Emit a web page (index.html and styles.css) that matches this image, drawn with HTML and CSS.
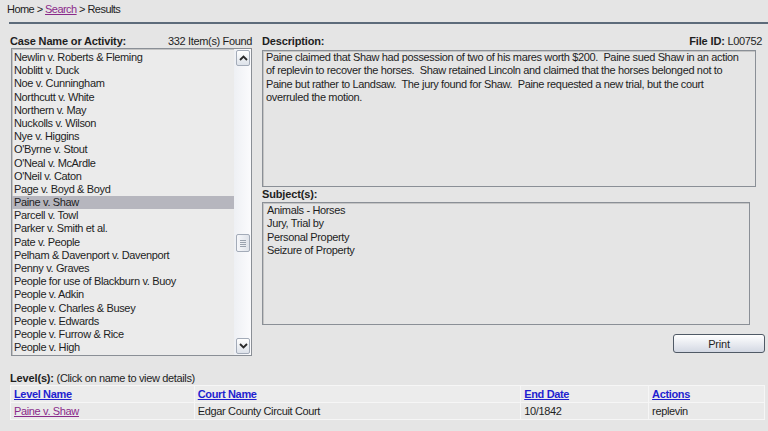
FILE: index.html
```html
<!DOCTYPE html>
<html>
<head>
<meta charset="utf-8">
<link rel="stylesheet" href="styles.css">
</head>
<body>
<div class="crumb">Home &gt; <a class="visited" href="#">Search</a> &gt; Results</div>
<div class="rule"></div>
<div class="main">
  <div class="left">
    <div class="labelrow"><b>Case Name or Activity:</b><span>332 Item(s) Found</span></div>
    <div class="listbox">
      <div class="items">
        <div class="item">Newlin v. Roberts &amp; Fleming</div>
        <div class="item">Noblitt v. Duck</div>
        <div class="item">Noe v. Cunningham</div>
        <div class="item">Northcutt v. White</div>
        <div class="item">Northern v. May</div>
        <div class="item">Nuckolls v. Wilson</div>
        <div class="item">Nye v. Higgins</div>
        <div class="item">O'Byrne v. Stout</div>
        <div class="item">O'Neal v. McArdle</div>
        <div class="item">O'Neil v. Caton</div>
        <div class="item">Page v. Boyd &amp; Boyd</div>
        <div class="item selected">Paine v. Shaw</div>
        <div class="item">Parcell v. Towl</div>
        <div class="item">Parker v. Smith et al.</div>
        <div class="item">Pate v. People</div>
        <div class="item">Pelham &amp; Davenport v. Davenport</div>
        <div class="item">Penny v. Graves</div>
        <div class="item">People for use of Blackburn v. Buoy</div>
        <div class="item">People v. Adkin</div>
        <div class="item">People v. Charles &amp; Busey</div>
        <div class="item">People v. Edwards</div>
        <div class="item">People v. Furrow &amp; Rice</div>
        <div class="item">People v. High</div>
      </div>
      <div class="scrollbar">
        <div class="sbtn"><svg width="9" height="6" viewBox="0 0 9 6"><path d="M1 5 L4.5 1.5 L8 5" fill="none" stroke="#2a2a2a" stroke-width="1.8"/></svg></div>
        <div class="thumb"><span></span><span></span><span></span><span></span></div>
        <div class="track"></div>
        <div class="sbtn"><svg width="9" height="6" viewBox="0 0 9 6"><path d="M1 1 L4.5 4.5 L8 1" fill="none" stroke="#2a2a2a" stroke-width="1.8"/></svg></div>
      </div>
    </div>
  </div>
  <div class="right">
    <div class="labelrow rlabel"><b>Description:</b><span><b>File ID:</b> L00752</span></div>
    <div class="desc">Paine claimed that Shaw had possession of two of his mares worth $200.&nbsp; Paine sued Shaw in an action<br>of replevin to recover the horses.&nbsp; Shaw retained Lincoln and claimed that the horses belonged not to<br>Paine but rather to Landsaw.&nbsp; The jury found for Shaw.&nbsp; Paine requested a new trial, but the court<br>overruled the motion.</div>
    <div class="sublabel"><b>Subject(s):</b></div>
    <div class="subjects">
      <div>Animals - Horses</div>
      <div>Jury, Trial by</div>
      <div>Personal Property</div>
      <div>Seizure of Property</div>
    </div>
    <div class="btnrow"><button class="print">Print</button></div>
  </div>
</div>
<div class="levels"><b>Level(s):</b> (Click on name to view details)</div>
<table class="grid">
  <colgroup><col class="c1"><col class="c2"><col class="c3"><col class="c4"></colgroup>
  <tr class="head"><th><a href="#">Level Name</a></th><th><a href="#">Court Name</a></th><th><a href="#">End Date</a></th><th><a href="#">Actions</a></th></tr>
  <tr><td><a class="visited" href="#">Paine v. Shaw</a></td><td>Edgar County Circuit Court</td><td>10/1842</td><td>replevin</td></tr>
</table>
</body>
</html>
```
FILE: styles.css
```css
* { box-sizing: border-box; }
html, body { margin: 0; padding: 0; }
body {
  background: #e5e5e5;
  color: #1e1e1e;
  font-family: "Liberation Sans", Arial, sans-serif;
  font-size: 11px;
  letter-spacing: -0.35px;
  width: 768px;
  height: 431px;
  overflow: hidden;
}
b { letter-spacing: -0.15px; }
a { color: #1f1fd0; }
a.visited { color: #8a2a8a; }
.crumb {
  padding: 2px 0 0 7px;
  line-height: 14px;
  height: 16px;
  letter-spacing: -0.55px;
}
.rule {
  margin: 6px 0 0 9px;
  height: 2px;
  background: #5d6b7a;
}
.main {
  display: flex;
  padding: 11px 0 0 10px;
}
.left { width: 242px; }
.labelrow {
  display: flex;
  justify-content: space-between;
  line-height: 13px;
  height: 13px;
}
.listbox {
  display: flex;
  height: 308px;
  background: #ebebeb;
  border: 1px solid #8a8f96;
  box-shadow: inset 1px 1px 0 #c4c4c4;
  margin-left: 1px;
}
.items {
  flex: 1;
  padding-top: 2px;
  overflow: hidden;
}
.item {
  line-height: 13.2px;
  height: 13.2px;
  padding-left: 2px;
  white-space: nowrap;
}
.item.selected { background: #b6b6be; }
.scrollbar {
  width: 17px;
  display: flex;
  flex-direction: column;
  padding: 1px 1px 1px 2px;
  background: linear-gradient(to right, #eef0f4, #fbfbfd);
}
.sbtn {
  height: 16px;
  border: 1px solid #a3abb8;
  border-radius: 2px;
  background: linear-gradient(to bottom, #ffffff, #dde2ea);
  display: flex;
  align-items: center;
  justify-content: center;
}
.thumb {
  margin-top: 168px;
  height: 18px;
  border: 1px solid #a3abb8;
  border-radius: 2px;
  background: linear-gradient(to right, #f6f7fa, #dfe3ea);
  display: flex;
  flex-direction: column;
  align-items: center;
  justify-content: center;
  gap: 1px;
}
.thumb span { width: 6px; height: 1px; background: #9aa2ae; }
.track { flex: 1; }
.right {
  width: 503px;
  margin-left: 10px;
}
.rlabel { padding-right: 3px; }
.desc {
  margin-top: 2px;
  width: 494px;
  height: 137px;
  border: 1px solid #8a8f96;
  box-shadow: inset 1px 1px 0 #c4c4c4;
  padding: 0 3px;
  line-height: 13.3px;
  white-space: nowrap;
  overflow: hidden;
}
.sublabel {
  margin-top: 1px;
  line-height: 13px;
  height: 14px;
}
.subjects {
  width: 488px;
  height: 123px;
  border: 1px solid #8a8f96;
  box-shadow: inset 1px 1px 0 #c4c4c4;
  padding: 1px 4px;
  line-height: 13.3px;
}
.btnrow {
  display: flex;
  justify-content: flex-end;
  margin-top: 9px;
}
.print {
  width: 92px;
  height: 19px;
  padding: 0;
  border: 1px solid #505a66;
  border-radius: 3px;
  background: linear-gradient(to bottom, #ffffff, #d3d8e3);
  font-family: "Liberation Sans", Arial, sans-serif;
  font-size: 11px;
  letter-spacing: -0.2px;
  color: #1e1e1e;
}
.levels {
  margin: 16px 0 0 10px;
  line-height: 13px;
  height: 13px;
}
.grid {
  margin: 0 0 0 10px;
  width: 755px;
  border-collapse: collapse;
  border: 1px solid;
  border-color: #f6f6f6 #a2a2a2 #a2a2a2 #f6f6f6;
}
.c1 { width: 184px; }
.c2 { width: 327px; }
.c3 { width: 128px; }
.c4 { width: 116px; }
.grid th, .grid td {
  text-align: left;
  padding: 0 3px;
  height: 17px;
  line-height: 15px;
  border: 1px solid #f6f6f6;
  font-size: 11px;
}
.grid th { background: #ececec; }
.grid td { background: #e9e9e9; }
.grid th a { font-weight: bold; }
```
